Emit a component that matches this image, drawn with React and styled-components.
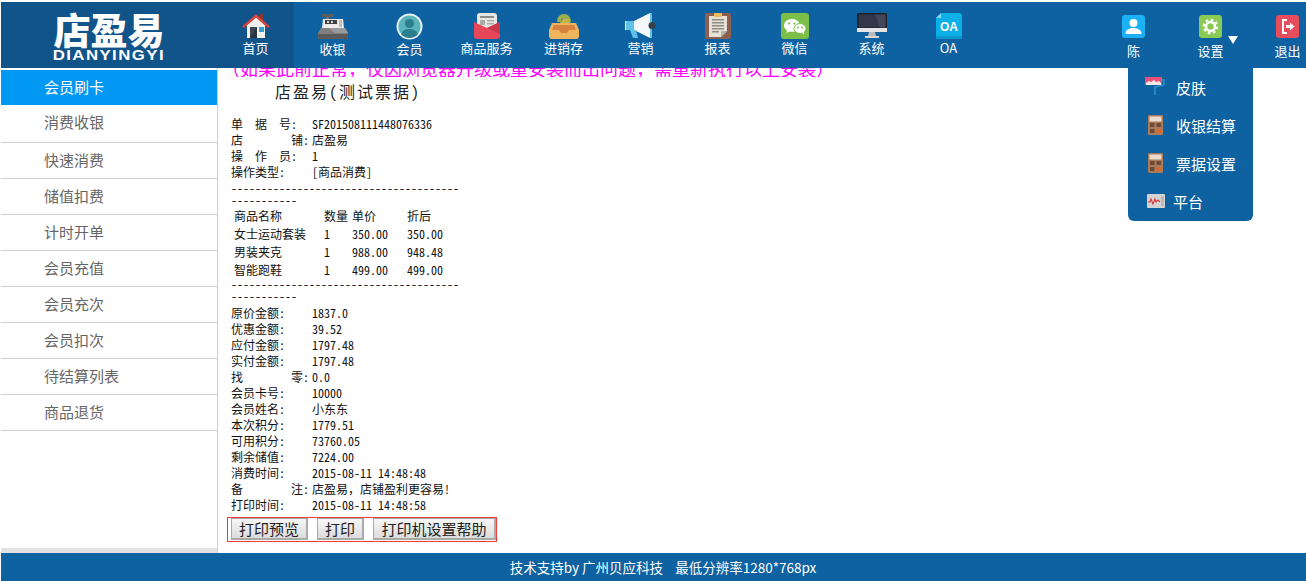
import React from 'react';
import styled, { createGlobalStyle } from 'styled-components';

const Global = createGlobalStyle`
  html,body{margin:0;padding:0;background:#fff;overflow:hidden;}
  body{font-family:"Noto Sans CJK SC","Liberation Sans",sans-serif;}
`;

/* ---------- shell ---------- */
const Shell = styled.div`
  position:relative;height:581px;padding:2px 0 0 1px;box-sizing:border-box;
  display:flex;flex-direction:column;overflow:hidden;
`;
const Header = styled.header`
  height:66px;flex:none;display:flex;background:#0e62a1;color:#fff;
`;
const Logo = styled.div`
  width:216px;flex:none;background:#10548a;display:flex;flex-direction:column;align-items:center;
  padding:8px 0 0 0;box-sizing:border-box;
`;
const LogoCn = styled.div`
  font-size:37px;font-weight:900;line-height:38px;color:#fff;
`;
const LogoEn = styled.div`
  font:bold 14px/14px "Liberation Sans",sans-serif;letter-spacing:1.2px;color:#fff;
  transform:scaleX(1.2);
`;
const NavItem = styled.div`
  width:77px;flex:none;display:flex;flex-direction:column;align-items:center;
  background:${p=>p.$active?'#10548a':'transparent'};
  padding-top:${p=>p.$side?'13px':'11px'};box-sizing:border-box;
  font-size:13px;
  span{margin-top:${p=>p.$side?'3px':'-1px'};line-height:20px;white-space:nowrap;}
  svg{display:block;flex:none;}
`;
const Spacer = styled.div`flex:1;`;
const SideItems = styled.div`display:flex;flex:none;margin-right:-20px;`;
const Caret = styled.i`
  position:absolute;left:56px;top:34px;width:0;height:0;
  border-left:5px solid transparent;border-right:5px solid transparent;border-top:8px solid #fff;
`;
const SideItem = styled(NavItem)`position:relative;`;

const Body = styled.div`flex:1;min-height:0;display:flex;`;
const Sidebar = styled.aside`
  width:216px;flex:none;border-right:1px solid #d0d0d0;padding-top:2px;
  display:flex;flex-direction:column;
`;
const SideLink = styled.div`
  height:35px;line-height:33px;padding-left:43px;font-size:15px;
  color:${p=>p.$active?'#fff':'#666'};
  background:${p=>p.$active?'#0098f2':'#fff'};
  border-bottom:1px solid ${p=>p.$active?'#fff':'#d0d0d0'};
  &:nth-child(2){height:36px;line-height:32px;}
`;
const SideFill = styled.div`flex:1;`;
const SideStrip = styled.div`height:5px;background:#e3e3e3;`;

const Content = styled.main`flex:1;min-width:0;padding-left:4px;overflow:hidden;`;
const Clip = styled.div`
  height:9px;overflow:hidden;display:flex;align-items:flex-end;
  color:#f0f;font-size:18px;line-height:18px;white-space:nowrap;
`;
const ReceiptTitle = styled.div`
  font:16px/20px "Noto Sans CJK SC",sans-serif;font-feature-settings:"hwid";letter-spacing:2px;color:#222;
  padding:4px 0 0 53px;height:35px;white-space:pre;
`;
const Receipt = styled.div`
  padding-left:9px;font:12px/16px "Noto Sans CJK SC",sans-serif;font-feature-settings:"hwid";color:#111;
`;
const Row = styled.div`display:grid;grid-template-columns:81px 1fr;white-space:pre;height:16px;`;
const Wide = styled.span`font-feature-settings:"hwid" 0;`;
const Dashes = styled.div`line-height:12px;white-space:pre-wrap;padding-top:${p=>p.$top}px;`;
const Goods = styled.div`padding:1px 0 0 3px;margin-bottom:-1px;`;
const GoodsRow = styled.div`
  display:grid;grid-template-columns:90px 28px 55px 1fr;height:18px;line-height:18px;white-space:pre;
`;
const Totals = styled.div`padding-top:3px;`;
const Actions = styled.div`
  display:flex;gap:9px;margin:4px 0 0 -4px;padding:0 0 0 3px;width:265px;height:23px;
  border:1px solid #f03a3a;
`;
const PrintBtn = styled.button`
  height:22px;padding:0;width:${p=>p.$w}px;flex:none;border:1px solid #a9a9a9;border-bottom-width:2px;border-right-width:2px;border-radius:0;
  background:linear-gradient(#f7f7f7,#dcdcdc);color:#222;
  font:15px/18px "Noto Sans CJK SC",sans-serif;
`;
const Footer = styled.footer`
  height:28px;flex:none;background:#0e62a1;color:#fff;text-align:center;
  font-size:13.5px;line-height:28px;white-space:pre;padding-left:19px;box-sizing:border-box;
`;

/* dropdown under 设置 */
const Menu = styled.div`
  position:absolute;left:1128px;top:68px;width:125px;height:153px;background:#0e62a1;
  border-radius:0 0 6px 6px;color:#fff;font-size:15px;box-sizing:border-box;
`;
const MenuItem = styled.div`
  height:38px;display:flex;align-items:center;padding-left:${p=>p.$pad||17}px;
  gap:${p=>p.$gap||11}px;
  svg{flex:none;}
`;

/* ---------- icons ---------- */
const Home = () => (
  <svg width="30" height="26" viewBox="0 0 30 26">
    <rect x="19" y="1" width="3" height="6" fill="#8a3a30"/>
    <path d="M6 12 15 4l9 8v13H6z" fill="#f1f1ee"/>
    <path d="M9 14h7v11H9z" fill="#3c4654"/>
    <path d="M16 14v11l-7 0z" fill="#2a3340"/>
    <rect x="18" y="14" width="5" height="5" fill="#3a9fc7"/>
    <path d="M1 13.5 15 1l14 12.5-2 1.5L15 4.5 3 15z" fill="#d9413a"/>
  </svg>
);
const Register = () => (
  <svg width="32" height="27" viewBox="0 0 32 27">
    <rect x="5" y="1" width="12" height="3" fill="#5d5d5d"/>
    <rect x="9" y="4" width="3" height="3" fill="#777"/>
    <path d="M6 6h20l1 9H5z" fill="#ececec"/>
    <rect x="8" y="7" width="12" height="4" fill="#3f3f3f"/>
    <rect x="10" y="8" width="2" height="2" fill="#ddd"/><rect x="14" y="8" width="2" height="2" fill="#ddd"/>
    <rect x="22" y="7" width="3" height="7" fill="#bdbdbd"/>
    <path d="M4 15h24l3 5v6H1v-6z" fill="#7f7f7f"/>
    <rect x="1" y="21" width="30" height="5" rx="1" fill="#5a5a5a"/>
    <path d="M12 15h16l3 5H18z" fill="#9a9a9a"/>
  </svg>
);
const Member = () => (
  <svg width="27" height="27" viewBox="0 0 27 27">
    <circle cx="13.5" cy="13.5" r="13" fill="#e8f2f2"/>
    <circle cx="13.5" cy="13.5" r="11" fill="#58b3bd"/>
    <circle cx="13.5" cy="10.5" r="4.6" fill="#2b7f8e"/>
    <path d="M5 21c2-4 5-5 8.500-5s6.500 1 8.500 5a11 11 0 0 1-17 0z" fill="#2b7f8e"/>
  </svg>
);
const Goods1 = () => (
  <svg width="26" height="26" viewBox="0 0 26 26">
    <rect x="3" y="0" width="20" height="16" rx="3" fill="#e6e6e4"/>
    <rect x="6" y="3" width="14" height="2" fill="#8d8d8d"/>
    <rect x="6" y="7" width="5" height="5" fill="#aaa"/>
    <rect x="13" y="7" width="7" height="1.500" fill="#aaa"/><rect x="13" y="10" width="7" height="1.500" fill="#aaa"/>
    <path d="M0 9l13 6 13-6v14a3 3 0 0 1-3 3H3a3 3 0 0 1-3-3z" fill="#e8475a"/>
    <path d="M13 15l13-6v12z" fill="#c83a4a"/>
  </svg>
);
const Stock = () => (
  <svg width="30" height="26" viewBox="0 0 30 26">
    <path d="M8 9c0-5 3-8 7-8s7 3 7 8h-4c0-3-1-4-3-4s-3 1-3 4z" fill="#9ab04a"/>
    <path d="M10 12l4-7 6 1 2 6z" fill="#c4b24a"/>
    <path d="M3 10h24l3 7v6a3 3 0 0 1-3 3H3a3 3 0 0 1-3-3v-6z" fill="#efb55c"/>
    <path d="M5 12h20l2 5h-7l-2 3h-6l-2-3H3z" fill="#d5823f"/>
  </svg>
);
const Horn = () => (
  <svg width="31" height="26" viewBox="0 0 31 26">
    <path d="M0 8h9v9H0z" fill="#fff"/>
    <path d="M1 8h8v9H1z" fill="#5fc0ea"/>
    <path d="M9 8 25 0v25L9 17z" fill="#f4f8fa"/>
    <rect x="25" y="0" width="2" height="25" fill="#5fc0ea"/>
    <circle cx="27" cy="12.500" r="3.500" fill="#36414d"/>
    <path d="M5 17h6l2 8H8z" fill="#5fc0ea"/>
  </svg>
);
const Report = () => (
  <svg width="26" height="26" viewBox="0 0 26 26">
    <rect width="26" height="26" rx="2" fill="#8d5f50"/>
    <path d="M4 3h18v15l-6 6H4z" fill="#e5e1d6"/>
    <path d="M16 24l6-6h-6z" fill="#b5b0a4"/>
    <rect x="9" y="0" width="8" height="4" rx="1" fill="#eebc55"/>
    <g fill="#8f8c84"><rect x="7" y="6" width="12" height="1.500"/><rect x="7" y="9" width="12" height="1.500"/><rect x="7" y="12" width="12" height="1.500"/><rect x="7" y="15" width="12" height="1.500"/><rect x="7" y="18" width="7" height="1.500"/></g>
  </svg>
);
const Wechat = () => (
  <svg width="28" height="26" viewBox="0 0 28 26">
    <rect width="28" height="26" rx="3" fill="#7bbf48"/>
    <path d="M11 6c-5 0-8 3-8 6.500 0 2 1 3.500 3 4.800L5.500 20l3-1.500c1 .3 1.500.3 2.500.3 4.500 0 8-2.800 8-6.300S15.500 6 11 6z" fill="#fff"/>
    <ellipse cx="19" cy="15.500" rx="6" ry="5" fill="#fff" stroke="#7bbf48"/>
    <path d="M21 19.500 23 22l-.5-3.500z" fill="#fff"/>
    <g fill="#7bbf48"><circle cx="8" cy="10.500" r="1.100"/><circle cx="13.500" cy="10.500" r="1.100"/><circle cx="17" cy="14.500" r=".9"/><circle cx="21" cy="14.500" r=".9"/></g>
  </svg>
);
const Monitor = () => (
  <svg width="30" height="26" viewBox="0 0 30 26">
    <rect width="30" height="19" rx="1" fill="#1f2127"/>
    <rect x="1.500" y="1.500" width="27" height="13" fill="#33374a"/>
    <path d="M18 1.500h10.500v13H23z" fill="#43475a"/>
    <rect y="15" width="30" height="4" fill="#e4e4e4"/>
    <path d="M12 19h6l1 4h-8z" fill="#bdbdbd"/>
    <rect x="8" y="23" width="14" height="2" fill="#d8d8d8"/>
  </svg>
);
const OaIcon = () => (
  <svg width="26" height="26" viewBox="0 0 26 26">
    <path d="M5 0h18a3 3 0 0 1 3 3v20a3 3 0 0 1-3 3H3a3 3 0 0 1-3-3V5z" fill="#0cb0e6"/>
    <path d="M5 0v5H0z" fill="#7fd8f3"/>
    <rect y="23" width="26" height="3" rx="1.500" fill="#0a98cc"/>
    <text x="13" y="18" textAnchor="middle" fontFamily="Liberation Sans" fontWeight="bold" fontSize="12" fill="#fff">OA</text>
  </svg>
);
const Person = () => (
  <svg width="23" height="23" viewBox="0 0 23 23">
    <rect width="23" height="23" rx="3" fill="#1cb1f5"/>
    <circle cx="11.500" cy="8" r="4" fill="#fff"/>
    <path d="M3.500 19c0-4 3.500-6 8-6s8 2 8 6z" fill="#fff"/>
  </svg>
);
const Gear = () => (
  <svg width="23" height="23" viewBox="0 0 23 23">
    <rect width="23" height="23" rx="3" fill="#8acb55"/>
    <circle cx="11.500" cy="11.500" r="4.500" fill="none" stroke="#fff" strokeWidth="2.500"/>
    <circle cx="11.500" cy="11.500" r="6.800" fill="none" stroke="#fff" strokeWidth="2" strokeDasharray="2.700 2.640"/>
  </svg>
);
const Logout = () => (
  <svg width="23" height="23" viewBox="0 0 23 23">
    <rect width="23" height="23" rx="3" fill="#e74c5c"/>
    <path d="M11 5H7v13h4" fill="none" stroke="#fff" strokeWidth="2"/>
    <path d="M10 10h4V7.500l4.500 4-4.500 4V13h-4z" fill="#fff"/>
  </svg>
);
const Roller = () => (
  <svg width="20" height="20" viewBox="0 0 20 20">
    <rect x="0" y="0" width="17" height="8" fill="#e94f77"/>
    <path d="M1 6l3-2 2 1 3-2 2 2 3-1 2 2v2H1z" fill="#f3e8e2"/>
    <path d="M17 3h2v5l-9 2v8" fill="none" stroke="#2f93c9" strokeWidth="1.500"/>
  </svg>
);
const Calc = () => (
  <svg width="15" height="20" viewBox="0 0 15 20">
    <rect width="15" height="20" rx="1" fill="#a87b5c"/>
    <rect x="1.500" y="1.500" width="12" height="5" fill="#ecdcd0"/>
    <g fill="#6e4a34"><rect x="2" y="8" width="4.500" height="4"/><rect x="8.500" y="8" width="4.500" height="4"/><rect x="2" y="14" width="4.500" height="4"/></g>
    <rect x="8.500" y="14" width="4.500" height="4" fill="#d9682a"/>
  </svg>
);
const Pulse = () => (
  <svg width="18" height="14" viewBox="0 0 18 14">
    <rect width="18" height="14" rx="1" fill="#d4d4d4"/>
    <rect x="14" y="2" width="3" height="10" fill="#bbb"/>
    <path d="M1 8h2l1-3 2 5 2-5 1 3 2-2 2 2" fill="none" stroke="#e23b3b" strokeWidth="1.200"/>
  </svg>
);

/* ---------- data ---------- */
const navs = [
  ['首页', Home], ['收银', Register], ['会员', Member], ['商品服务', Goods1], ['进销存', Stock],
  ['营销', Horn], ['报表', Report], ['微信', Wechat], ['系统', Monitor], ['OA', OaIcon],
];
const sideLinks = ['会员刷卡','消费收银','快速消费','储值扣费','计时开单','会员充值','会员充次','会员扣次','待结算列表','商品退货'];
const head = [
  ['单  据  号:','SF201508111448076336'],
  ['店        铺:','店盈易'],
  ['操  作  员:','1'],
  ['操作类型:','[商品消费]'],
];
const goods = [
  ['商品名称','数量','单价','折后'],
  ['女士运动套装','1','350.00','350.00'],
  ['男装夹克','1','988.00','948.48'],
  ['智能跑鞋','1','499.00','499.00'],
];
const totals = [
  ['原价金额:','1837.0'],['优惠金额:','39.52'],['应付金额:','1797.48'],['实付金额:','1797.48'],
  ['找        零:','0.0'],['会员卡号:','10000'],['会员姓名:','小东东'],['本次积分:','1779.51'],
  ['可用积分:','73760.05'],['剩余储值:','7224.00'],['消费时间:','2015-08-11 14:48:48'],
  ['备        注:',<>店盈易<Wide>，</Wide>店铺盈利更容易!</>],['打印时间:','2015-08-11 14:48:58'],
];
const dash = '-'.repeat(38) + '\n' + '-'.repeat(11);

export default function App() {
  return (
    <Shell>
      <Global/>
      <Header>
        <Logo>
          <LogoCn>店盈易</LogoCn>
          <LogoEn>DIANYINGYI</LogoEn>
        </Logo>
        {navs.map(([label,Icon],i)=>(
          <NavItem key={label} $active={i===0}><Icon/><span>{label}</span></NavItem>
        ))}
        <Spacer/>
        <SideItems>
          <SideItem $side><Person/><span>陈</span></SideItem>
          <SideItem $side><Gear/><span>设置</span><Caret/></SideItem>
          <SideItem $side><Logout/><span>退出</span></SideItem>
        </SideItems>
      </Header>

      <Body>
        <Sidebar>
          {sideLinks.map((s,i)=><SideLink key={s} $active={i===0}>{s}</SideLink>)}
          <SideFill/>
          <SideStrip/>
        </Sidebar>
        <Content>
          <Clip>（如果此前正常，仅因浏览器升级或重安装而出问题，需重新执行以上安装）</Clip>
          <ReceiptTitle>店盈易(测试票据)</ReceiptTitle>
          <Receipt>
            {head.map(([a,b])=><Row key={a}><span>{a}</span><span>{b}</span></Row>)}
            <Dashes $top={2}>{dash}</Dashes>
            <Goods>
              {goods.map(g=>(
                <GoodsRow key={g[0]}>{g.map((c,i)=><span key={i}>{c}</span>)}</GoodsRow>
              ))}
            </Goods>
            <Dashes $top={0}>{dash}</Dashes>
            <Totals>
              {totals.map(([a,b])=><Row key={a}><span>{a}</span><span>{b}</span></Row>)}
            </Totals>
            <Actions>
              <PrintBtn $w={77}>打印预览</PrintBtn>
              <PrintBtn $w={47}>打印</PrintBtn>
              <PrintBtn $w={123}>打印机设置帮助</PrintBtn>
            </Actions>
          </Receipt>
        </Content>
      </Body>

      <Footer>技术支持by 广州贝应科技    最低分辨率1280*768px</Footer>

      <Menu>
        <MenuItem><Roller/><span>皮肤</span></MenuItem>
        <MenuItem $pad={20} $gap={13}><Calc/><span>收银结算</span></MenuItem>
        <MenuItem $pad={20} $gap={13}><Calc/><span>票据设置</span></MenuItem>
        <MenuItem $pad={19} $gap={8}><Pulse/><span>平台</span></MenuItem>
      </Menu>
    </Shell>
  );
}
